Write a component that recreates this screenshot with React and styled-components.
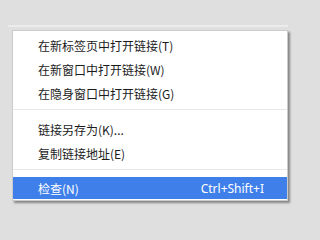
import * as React from 'react';
import { styled, createGlobalStyle } from 'styled-components';

const GlobalStyle = createGlobalStyle`
    html, body {
        margin: 0;
        padding: 0;
        background: #dfdfdf;
    }
    body {
        width: 309px;
        height: 207px;
        overflow: hidden;
    }
`;

const Page = styled.div`
    display: flex;
    flex-direction: column;
    padding-top: 25px;
    padding-left: 8px;
    width: 309px;
    height: 207px;
    box-sizing: border-box;
`;

const Glow = styled.div`
    width: 280px;
    height: 2px;
    background: #ebebeb;
    margin-bottom: 3px;
`;

const Menu = styled.div`
    display: flex;
    flex-direction: column;
    margin-left: 4px;
    width: 276px;
    box-sizing: border-box;
    background: #ffffff;
    border: 1px solid #cbcbcb;
    padding: 2px 0 1px;
    box-shadow: 2px 2px 2px rgba(0, 0, 0, 0.4);
    font-family: "Noto Sans CJK SC", "Noto Sans", sans-serif;
    font-size: 12px;
`;

const Item = styled.div`
    display: flex;
    align-items: center;
    justify-content: space-between;
    height: ${p => (p.$active ? 22 : 24)}px;
    padding: 0 23px 0 25px;
    color: ${p => (p.$active ? '#ffffff' : '#1c1c1c')};
    background: ${p => (p.$active ? '#3f7fea' : 'transparent')};
    white-space: nowrap;
`;

const Shortcut = styled.span`
    font-family: "Noto Sans", sans-serif;
    font-size: 12px;
`;

const Divider = styled.div`
    height: 1px;
    background: #e8e8e8;
    margin: 4px 0 7px;
`;

const sections = [
    [
        { label: '在新标签页中打开链接(T)' },
        { label: '在新窗口中打开链接(W)' },
        { label: '在隐身窗口中打开链接(G)' },
    ],
    [
        { label: '链接另存为(K)...' },
        { label: '复制链接地址(E)' },
    ],
    [
        { label: '检查(N)', shortcut: 'Ctrl+Shift+I', active: true },
    ],
];

export default function App() {
    return <Page>
        <GlobalStyle/>
        <Glow/>
        <Menu>
            {
                sections.map((items, idx) => <React.Fragment key={idx}>
                    {idx > 0 && <Divider/>}
                    {items.map(item => <Item key={item.label} $active={item.active}>
                        <span>{item.label}</span>
                        {item.shortcut && <Shortcut>{item.shortcut}</Shortcut>}
                    </Item>)}
                </React.Fragment>)
            }
        </Menu>
    </Page>
}
